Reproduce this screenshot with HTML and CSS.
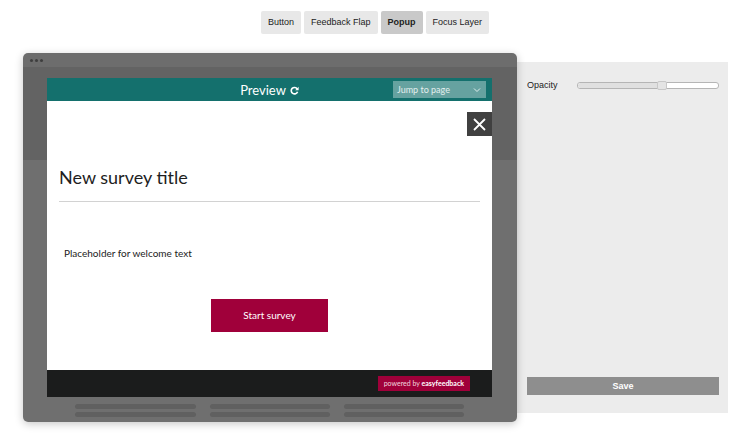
FILE: index.html
```html
<!DOCTYPE html>
<html lang="en">
<head>
    <meta charset="UTF-8">
    <title>Popup preview</title>
    <link rel="stylesheet" href="styles.css">
</head>
<body>
    <ul class="tab_list">
        <li>Button</li>
        <li>Feedback Flap</li>
        <li class="active">Popup</li>
        <li>Focus Layer</li>
    </ul>
    <div class="stage">
        <div class="browser_frame">
            <div class="title_bar">
                <span></span><span></span><span></span>
            </div>
            <div class="page_box">
                <div class="popup_box">
                    <div class="popup_head">
                        <span class="preview_text">Preview</span>
                        <svg class="refresh_icon" width="9" height="9" viewBox="0 0 10 10">
                            <path d="M8 3.2A3.6 3.6 0 1 0 8.4 6.4" fill="none" stroke="#fff" stroke-width="1.8"/>
                            <path d="M9.6 0.8V4.6H5.8Z" fill="#fff"/>
                        </svg>
                        <div class="jump_select">
                            <span>Jump to page</span>
                            <svg width="8" height="6" viewBox="0 0 8 6">
                                <path d="M1 1.5L4 4.5L7 1.5" fill="none" stroke="#dceceb" stroke-width="1"/>
                            </svg>
                        </div>
                    </div>
                    <div class="popup_body">
                        <div class="close_btn">
                            <svg width="13" height="13" viewBox="0 0 13 13">
                                <path d="M1 1L12 12M12 1L1 12" stroke="#fff" stroke-width="1.8"/>
                            </svg>
                        </div>
                        <h1 class="survey_title">New survey title</h1>
                        <p class="welcome_text">Placeholder for welcome text</p>
                        <div class="start_btn">Start survey</div>
                    </div>
                    <div class="popup_foot">
                        <div class="powered_badge">powered by <b>easyfeedback</b></div>
                    </div>
                </div>
                <div class="skeleton_box">
                    <i></i><i></i><i></i>
                    <i></i><i></i><i></i>
                </div>
            </div>
        </div>
        <div class="side_panel">
            <div class="opacity_row">
                <span>Opacity</span>
                <div class="slider">
                    <div class="slider_fill"></div>
                    <div class="slider_thumb"></div>
                </div>
            </div>
            <div class="save_btn">Save</div>
        </div>
    </div>
</body>
</html>
```

FILE: styles.css
```css
* {
    margin: 0;
    padding: 0;
    list-style: none;
    box-sizing: border-box;
}
body {
    width: 750px;
    height: 443px;
    padding-top: 11px;
    background-color: #fff;
    font-family: "Liberation Sans", Arial, sans-serif;
    overflow: hidden;
}
/* 顶部切换 */
.tab_list {
    display: flex;
    justify-content: center;
    gap: 3px;
}
.tab_list li {
    height: 23px;
    padding: 0 7px;
    line-height: 23px;
    font-size: 9px;
    color: #222;
    background-color: #e8e8e8;
    border-radius: 2px;
}
.tab_list li.active {
    font-weight: bold;
    background-color: #c9c9c9;
}
/* 主体 */
.stage {
    display: flex;
    align-items: flex-start;
    margin-top: 19px;
    padding-left: 23px;
}
.browser_frame {
    position: relative;
    z-index: 2;
    width: 494px;
    border-radius: 5px;
    overflow: hidden;
    box-shadow: 0 2px 8px rgba(0, 0, 0, 0.22);
}
.title_bar {
    display: flex;
    align-items: center;
    gap: 2px;
    height: 14px;
    padding-left: 7px;
    background-color: #6d6d6d;
}
.title_bar span {
    width: 3px;
    height: 3px;
    border-radius: 50%;
    background-color: #3e3e3e;
}
.page_box {
    padding: 11px 25px 5px 24px;
    background: linear-gradient(#636363 0 93px, #6f6f6f 93px);
}
/* 弹窗 */
.popup_box {
    display: flex;
    flex-direction: column;
    width: 445px;
    font-family: Lato, "Open Sans", sans-serif;
}
.popup_head {
    display: flex;
    position: relative;
    align-items: center;
    justify-content: center;
    gap: 4px;
    height: 23px;
    background-color: #14706d;
    color: #fff;
}
.preview_text {
    font-size: 13px;
}
.refresh_icon {
    margin-top: 1px;
}
.jump_select {
    display: flex;
    position: absolute;
    top: 3px;
    right: 6px;
    align-items: center;
    justify-content: space-between;
    width: 93px;
    height: 17px;
    padding: 0 5px 0 4px;
    background-color: rgba(255, 255, 255, 0.35);
    color: #e3efee;
    font-size: 9px;
}
.popup_body {
    position: relative;
    height: 269px;
    padding: 0 12px;
    background-color: #fff;
}
.close_btn {
    display: flex;
    position: absolute;
    top: 11px;
    right: 0;
    align-items: center;
    justify-content: center;
    width: 25px;
    height: 24px;
    background-color: #404040;
}
.survey_title {
    margin-top: 65px;
    padding-bottom: 13px;
    line-height: 22px;
    font-size: 18px;
    font-weight: normal;
    color: #1e1e1e;
    border-bottom: 1px solid #d2d2d2;
}
.welcome_text {
    margin-top: 44px;
    padding-left: 5px;
    line-height: 14px;
    font-size: 10px;
    color: #222;
}
.start_btn {
    width: 117px;
    height: 33px;
    margin: 39px auto 0;
    line-height: 33px;
    text-align: center;
    font-size: 10px;
    color: #fff;
    background-color: #a0003a;
}
.popup_foot {
    display: flex;
    align-items: center;
    justify-content: flex-end;
    height: 27px;
    padding-right: 22px;
    background-color: #1b1c1c;
}
.powered_badge {
    height: 15px;
    padding: 0 6px;
    line-height: 15px;
    font-size: 7px;
    color: #f2d6df;
    background-color: #a0003a;
}
.powered_badge b {
    color: #fff;
}
/* 背景网页骨架 */
.skeleton_box {
    display: grid;
    grid-template-columns: 121px 120px 120px;
    gap: 3px 14px;
    margin: 7px 0 0 28px;
}
.skeleton_box i {
    display: block;
    height: 5px;
    border-radius: 3px;
    background-color: #606060;
}
/* 右侧面板 */
.side_panel {
    display: flex;
    flex-direction: column;
    justify-content: space-between;
    width: 211px;
    height: 351px;
    margin-top: 9px;
    padding: 18px 9px 18px 10px;
    background-color: #ececec;
    font-size: 9px;
    color: #222;
}
.opacity_row {
    display: flex;
    align-items: center;
    justify-content: space-between;
}
.slider {
    position: relative;
    width: 142px;
    height: 7px;
    background-color: #fff;
    border: 1px solid #b5b5b5;
    border-radius: 3px;
}
.slider_fill {
    width: 58%;
    height: 100%;
    background-color: #e0e0e0;
    border-radius: 3px 0 0 3px;
}
.slider_thumb {
    position: absolute;
    top: -2px;
    left: 79px;
    width: 10px;
    height: 9px;
    background-color: #e4e4e4;
    border: 1px solid #c8c8c8;
    border-radius: 2px;
}
.save_btn {
    height: 18px;
    line-height: 18px;
    text-align: center;
    font-weight: bold;
    color: #fff;
    background-color: #8e8e8e;
}
```
